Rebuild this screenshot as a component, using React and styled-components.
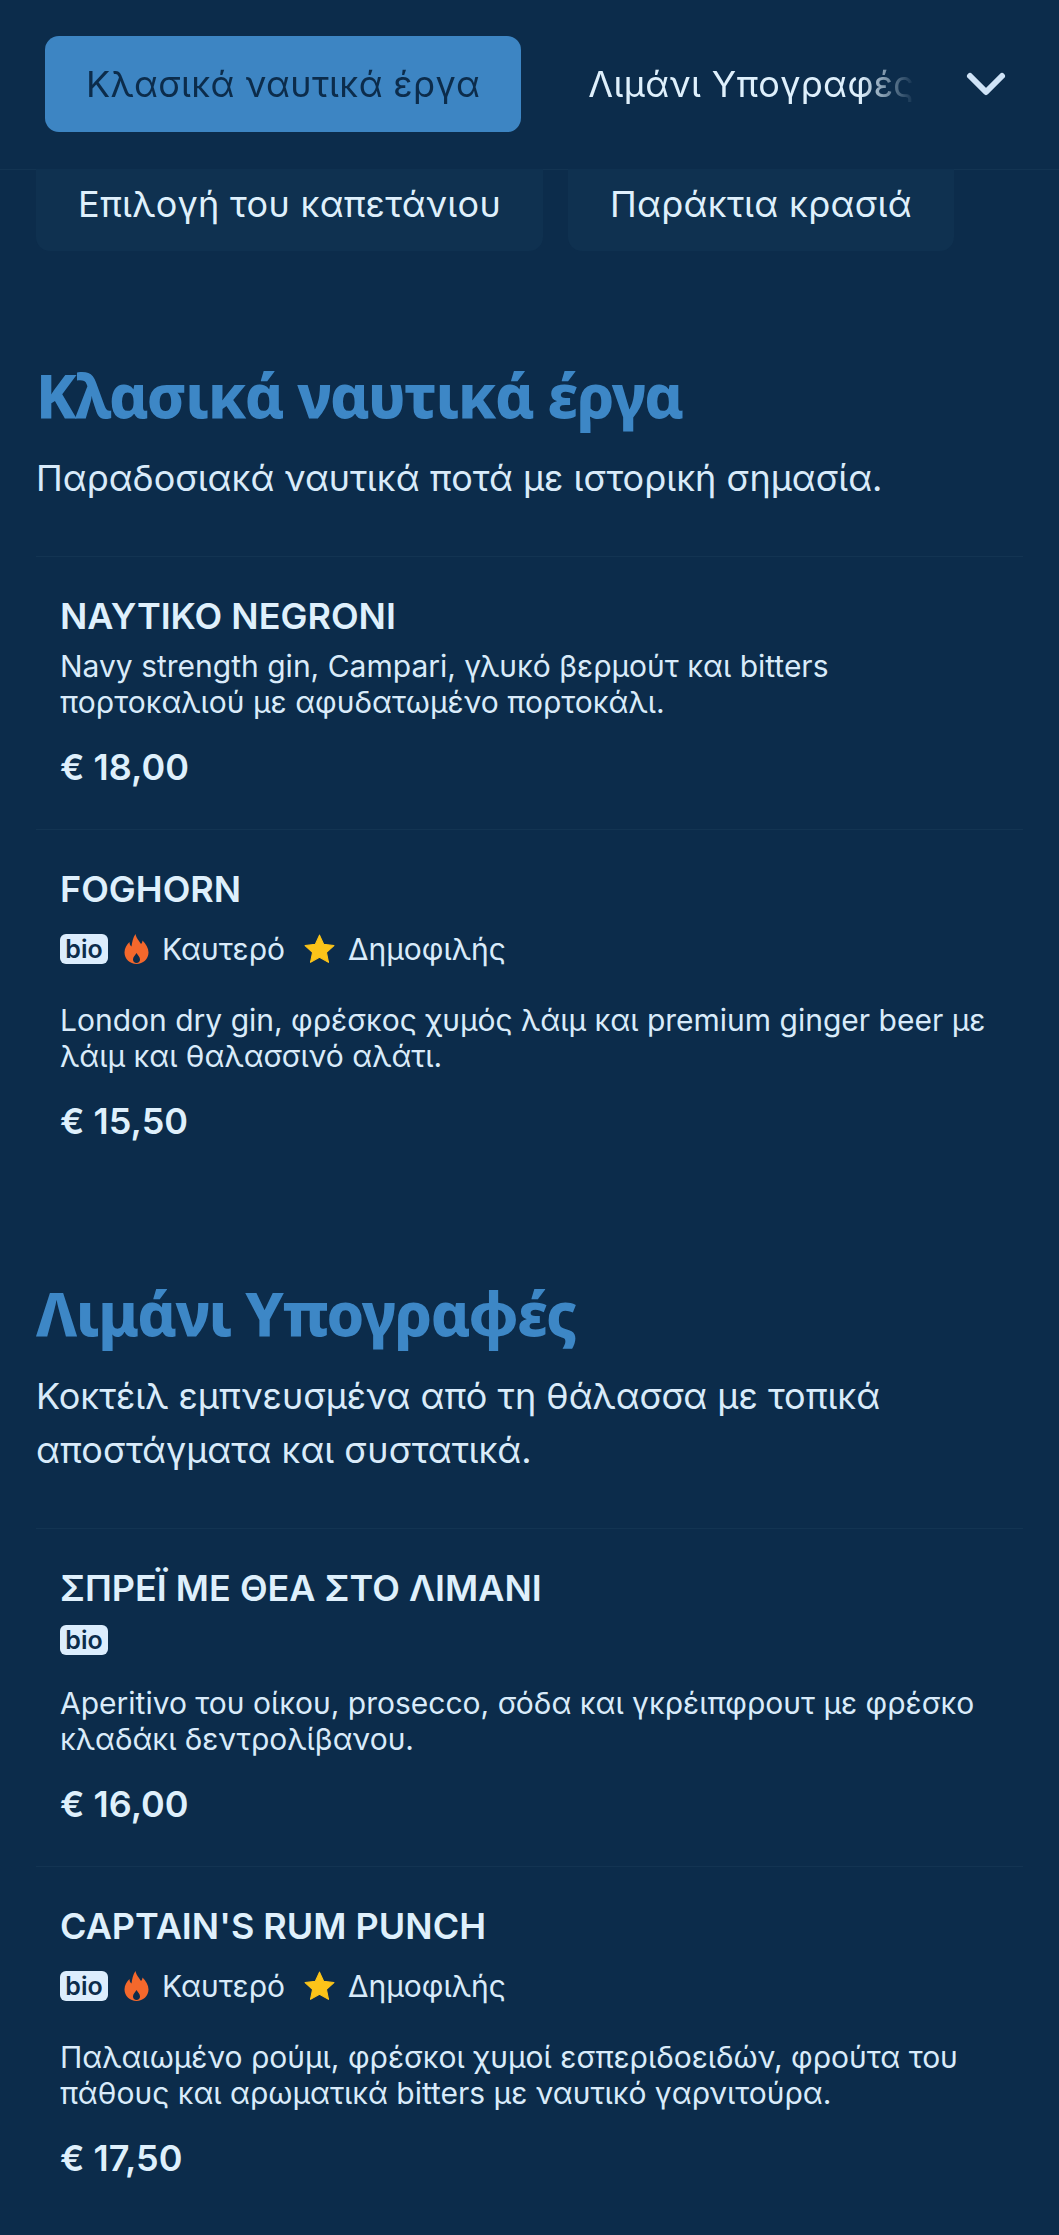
import React from "react";
import styled, { createGlobalStyle } from "styled-components";

const Global = createGlobalStyle`
  html, body { margin: 0; padding: 0; background: #0c2c4b; }
  * { box-sizing: border-box; }
`;
const Page = styled.div`
  width: 1059px; height: 2235px; overflow: hidden; background: #0c2c4b;
  font-family: Inter, "Noto Sans", sans-serif; color: #d9ebfa;
`;
const Header = styled.header`
  height: 170px; display: flex; align-items: flex-start;
  padding: 36px 0 0 45px; border-bottom: 1px solid #133452;
`;
const Scroller = styled.div`
  width: 930px; flex: none; display: flex; gap: 26px; overflow: hidden;
  -webkit-mask-image: linear-gradient(to right, #000 815px, transparent 870px);
  mask-image: linear-gradient(to right, #000 815px, transparent 870px);
`;
const TopTab = styled.div`
  flex: none; height: 96px; padding: 0 41px; display: flex; align-items: center;
  font-size: 36px; letter-spacing: 0.35px; border-radius: 14px; white-space: nowrap;
  background: ${p => (p.$active ? "#3d85c3" : "transparent")};
  color: ${p => (p.$active ? "#0c2c4b" : "#dff0fc")};
`;
const Chevron = styled.div`
  flex: none; width: 44px; height: 30px; margin: 33px 0 0 -11px; color: #cfe3f7;
`;
const SubTabs = styled.div`
  display: flex; gap: 25px; padding-left: 36px; margin-top: -1px;
`;
const SubTab = styled.div`
  height: 82px; padding: 0 42px 12px; display: flex; align-items: center;
  font-size: 36px; letter-spacing: 0.3px; white-space: nowrap; color: #dff0fc; background: #0f3150;
  border-radius: 0 0 14px 14px;
`;
const Section = styled.section`
  padding: 0 36px; margin-top: ${p => p.$top}px;
`;
const Heading = styled.h2`
  margin: 0; font: 800 60px/72px "Noto Sans", sans-serif; letter-spacing: -1.5px; color: #3d87c6;
`;
const Sub = styled.p`
  margin: 20px 0 0; font-size: 36px; line-height: 54px; color: #d9ebfa;
`;
const List = styled.div`margin-top: 51px;`;
const Item = styled.article`
  border-top: 1px solid #133452; padding: 37px 24px 40px;
`;
const Title = styled.h3`
  margin: 0; font-size: 36px; line-height: 44px; font-weight: 600; color: #dff0fc;
`;
const Tags = styled.div`
  display: flex; align-items: center; height: ${p => (p.$hot ? 52 : 36)}px; margin-top: 12px;
  font-size: 30px; color: #d9ebfa;
`;
const Bio = styled.span`
  background: #dcedfd; color: #0c2c4b; font-size: 25px; font-weight: 600;
  border-radius: 6px; width: 48px; height: 30px; display: flex; align-items: center; justify-content: center;
`;
const Flame = styled.svg`flex: none; width: 25px; height: 30px; margin-left: 16px; color: #f4682c;`;
const StarIcon = styled.svg`flex: none; width: 31px; height: 30px; margin-left: 19px; color: #fcc419;`;
const TagText = styled.span`margin-left: 13px;`;
const Desc = styled.p`
  margin: ${p => (p.$afterTags ? 27 : 10)}px 0 0; font-size: 30px; line-height: 36px; color: #d9ebfa;
`;
const Price = styled.div`
  margin-top: 25px; font-size: 36px; line-height: 44px; font-weight: 600; color: #dff0fc;
`;

const Meta = ({ hot }) => (
  <Tags $hot={hot}>
    <Bio>bio</Bio>
    {hot && <>
      <Flame viewBox="0 0 24 30" aria-hidden="true">
        <path fill="currentColor" fillRule="evenodd" d="M11 0C12 5 15 7 16.500 10C17.500 9 18 7.500 18 6.500C21.500 10 24 14 24 18.500C24 25 18.500 30 12 30C5.500 30 0 25 0 18.500C0 14 2.500 10.500 5 8C5 10 5.800 11.500 7 12.500C7.500 8 8.500 3.500 11 0ZM12 19C13.500 21.500 15.500 23 15.500 25.500C15.500 27.500 14 29 12 29C10 29 8.500 27.500 8.500 25.500C8.500 23 10.500 21.500 12 19Z"/>
      </Flame>
      <TagText>Καυτερό</TagText>
      <StarIcon viewBox="0 0 29 28" aria-hidden="true">
        <path fill="currentColor" stroke="currentColor" strokeWidth="1" strokeLinejoin="round" d="M14.500 1l4 8.700 9.500 1.100-7 6.400 1.900 9.300-8.400-4.700-8.400 4.700 1.900-9.300-7-6.400 9.500-1.100z"/>
      </StarIcon>
      <TagText>Δημοφιλής</TagText>
    </>}
  </Tags>
);

const Dish = ({ title, meta, hot, children, price }) => (
  <Item>
    <Title>{title}</Title>
    {meta && <Meta hot={hot} />}
    <Desc $afterTags={meta}>{children}</Desc>
    <Price>{price}</Price>
  </Item>
);

export default function App() {
  return (
    <Page>
      <Global />
      <Header>
        <Scroller>
          <TopTab $active>Κλασικά ναυτικά έργα</TopTab>
          <TopTab>Λιμάνι Υπογραφές</TopTab>
        </Scroller>
        <Chevron>
          <svg width="44" height="30" viewBox="0 0 44 30" fill="none"><path d="M6 7L22 23L38 7" stroke="currentColor" strokeWidth="6" strokeLinecap="round" strokeLinejoin="round"/></svg>
        </Chevron>
      </Header>
      <SubTabs>
        <SubTab>Επιλογή του καπετάνιου</SubTab>
        <SubTab>Παράκτια κρασιά</SubTab>
      </SubTabs>
      <Section $top={108}>
        <Heading>Κλασικά ναυτικά έργα</Heading>
        <Sub>Παραδοσιακά ναυτικά ποτά με ιστορική σημασία.</Sub>
        <List>
          <Dish title="ΝΑΥΤΙΚΟ NEGRONI" price="€ 18,00">Navy strength gin, Campari, γλυκό βερμούτ και bitters<br/>πορτοκαλιού με αφυδατωμένο πορτοκάλι.</Dish>
          <Dish title="FOGHORN" meta hot price="€ 15,50">London dry gin, φρέσκος χυμός λάιμ και premium ginger beer με<br/>λάιμ και θαλασσινό αλάτι.</Dish>
        </List>
      </Section>
      <Section $top={94}>
        <Heading>Λιμάνι Υπογραφές</Heading>
        <Sub>Κοκτέιλ εμπνευσμένα από τη θάλασσα με τοπικά<br/>αποστάγματα και συστατικά.</Sub>
        <List>
          <Dish title="ΣΠΡΕΪ ΜΕ ΘΕΑ ΣΤΟ ΛΙΜΑΝΙ" meta price="€ 16,00">Aperitivo του οίκου, prosecco, σόδα και γκρέιπφρουτ με φρέσκο<br/>κλαδάκι δεντρολίβανου.</Dish>
          <Dish title="CAPTAIN'S RUM PUNCH" meta hot price="€ 17,50">Παλαιωμένο ρούμι, φρέσκοι χυμοί εσπεριδοειδών, φρούτα του<br/>πάθους και αρωματικά bitters με ναυτικό γαρνιτούρα.</Dish>
        </List>
      </Section>
    </Page>
  );
}
